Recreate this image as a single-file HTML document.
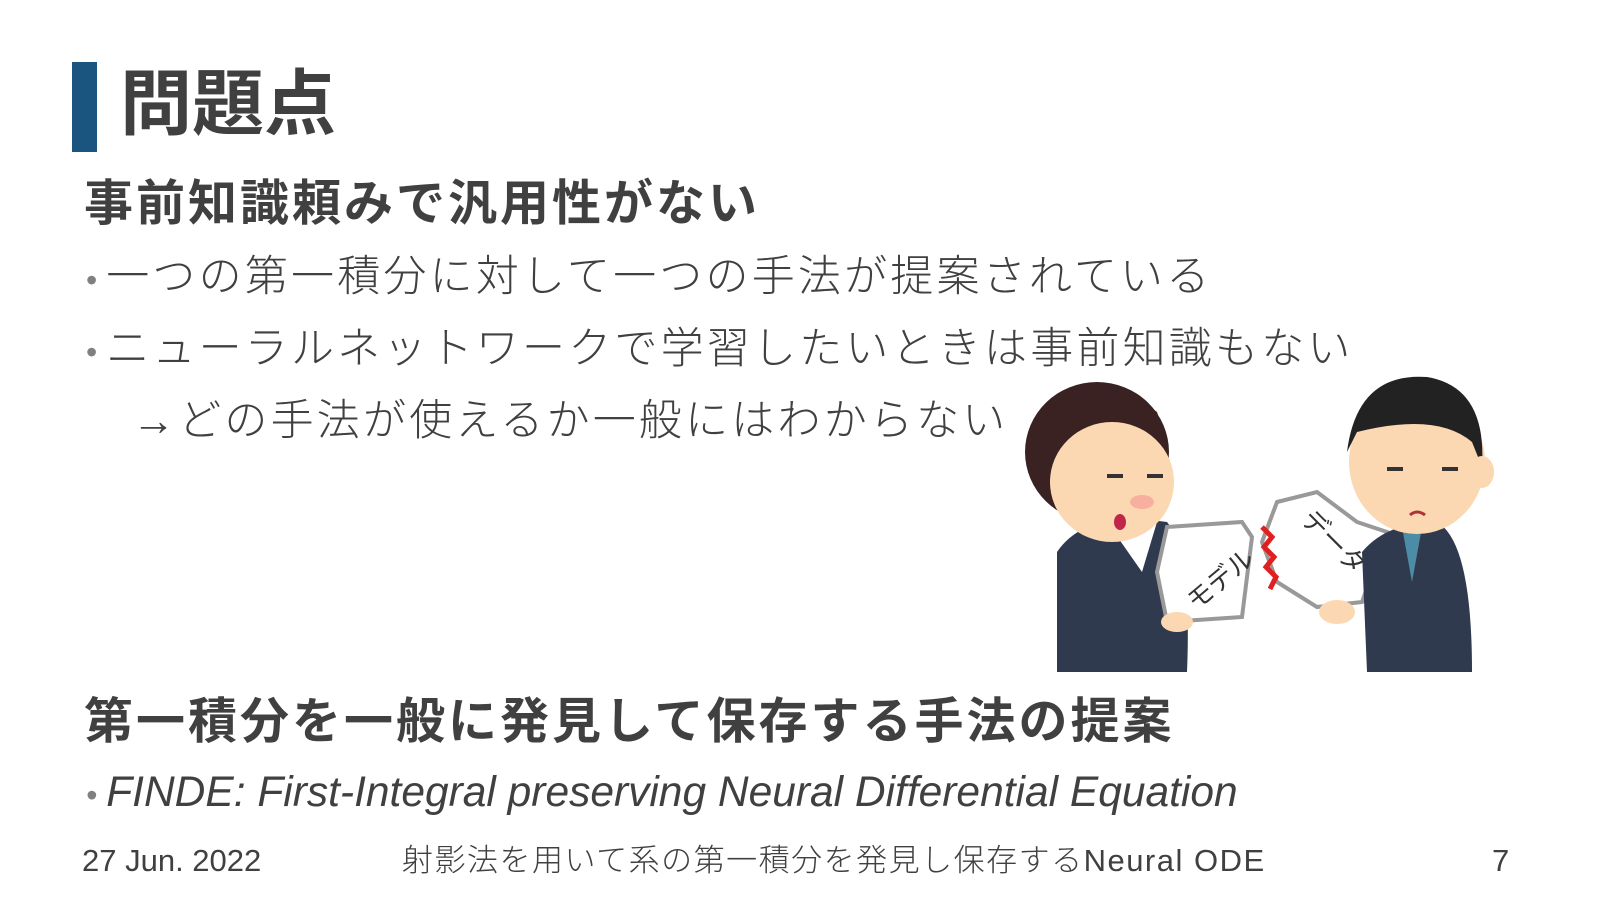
<!DOCTYPE html>
<html><head><meta charset="utf-8"><style>
body{margin:0;width:1600px;height:900px;background:#fff;overflow:hidden;position:relative;font-family:"Liberation Sans","Noto Sans CJK JP",sans-serif;color:#404040}
.a{position:absolute;white-space:nowrap}
.bar{left:72px;top:62px;width:25px;height:90px;background:#1a5580}
.t{left:120px;top:60px;font-size:72px;font-weight:bold;line-height:90px}
.h{left:84px;font-size:49px;font-weight:bold;line-height:60px;letter-spacing:3px}
.b{left:86px;font-size:43px;font-weight:300;line-height:60px;letter-spacing:3.2px}
.b .d{color:#808080;font-size:32px;margin-right:9px;letter-spacing:0}
.f{top:841px;font-size:31px;line-height:40px;font-weight:300}
</style></head><body>
<div class="a bar"></div>
<div class="a t">問題点</div>
<div class="a h" style="top:174px">事前知識頼みで汎用性がない</div>
<div class="a b" style="top:247px"><span class="d">•</span>一つの第一積分に対して一つの手法が提案されている</div>
<div class="a b" style="top:319px"><span class="d">•</span>ニューラルネットワークで学習したいときは事前知識もない</div>
<div class="a b" style="top:391px;left:132px">→どの手法が使えるか一般にはわからない</div>
<div class="a h" style="top:692px">第一積分を一般に発見して保存する手法の提案</div>
<div class="a b" style="top:763px;font-style:italic;font-family:'Liberation Sans',sans-serif;font-size:42.5px;letter-spacing:0;font-weight:normal"><span class="d">•</span>FINDE: First-Integral preserving Neural Differential Equation</div>
<div class="a f" style="left:82px">27 Jun. 2022</div>
<div class="a f" style="left:402px;letter-spacing:1.5px">射影法を用いて系の第一積分を発見し保存するNeural ODE</div>
<div class="a f" style="left:1507px;left:1492px">7</div>
<svg class="a" style="left:1012px;top:372px" width="490" height="300" viewBox="0 0 480 300">
<path d="M40 300 L40 180 Q60 150 110 145 L150 150 Q175 180 170 300Z" fill="#2f3a4f"/>
<path d="M90 150 L125 200 L140 150Z" fill="#fff"/>
<ellipse cx="80" cy="80" rx="72" ry="70" fill="#3a2222"/>
<ellipse cx="95" cy="110" rx="62" ry="60" fill="#fbd7b2"/>
<path d="M40 70 Q90 10 150 70 L140 40 Q90 0 40 40Z" fill="#3a2222"/>
<ellipse cx="45" cy="110" rx="12" ry="16" fill="#fbd7b2"/>
<ellipse cx="125" cy="130" rx="12" ry="7" fill="#f7b0a0"/>
<rect x="90" y="102" width="16" height="4" fill="#333"/><rect x="130" y="102" width="16" height="4" fill="#333"/>
<ellipse cx="103" cy="150" rx="6" ry="8" fill="#c0264a"/>
<path d="M150 155 L225 150 L235 165 L225 245 L150 250 L140 200Z" fill="#fff" stroke="#999" stroke-width="4"/>
<path d="M260 130 L300 120 L340 150 L370 160 L345 230 L300 235 L260 210 L245 170Z" fill="#fff" stroke="#999" stroke-width="4"/>
<path d="M245 155 l10 10 l-8 10 l10 10 l-8 10 l10 10 l-6 12" fill="none" stroke="#e02020" stroke-width="5"/>
<text x="165" y="230" font-size="26" fill="#333" transform="rotate(-40 185 215)" font-family="Noto Sans CJK JP">モデル</text>
<text x="270" y="160" font-size="26" fill="#333" transform="rotate(45 290 170)" font-family="Noto Sans CJK JP">データ</text>
<path d="M350 300 L345 180 Q370 150 420 150 Q455 170 455 300Z" fill="#2f3a4f"/>
<path d="M385 155 L395 210 L405 155Z" fill="#4d8ca6"/>
<ellipse cx="400" cy="90" rx="68" ry="72" fill="#fbd7b2"/>
<path d="M330 80 Q340 0 410 5 Q470 15 465 95 L455 70 Q420 40 340 60Z" fill="#222"/>
<ellipse cx="465" cy="100" rx="12" ry="16" fill="#fbd7b2"/>
<rect x="370" y="95" width="16" height="4" fill="#333"/><rect x="425" y="95" width="16" height="4" fill="#333"/>
<path d="M393 143 Q400 137 408 143" stroke="#b0303a" stroke-width="3" fill="none"/>
<ellipse cx="160" cy="250" rx="16" ry="10" fill="#fbd7b2"/><ellipse cx="320" cy="240" rx="18" ry="12" fill="#fbd7b2"/>
</svg>
</body></html>
